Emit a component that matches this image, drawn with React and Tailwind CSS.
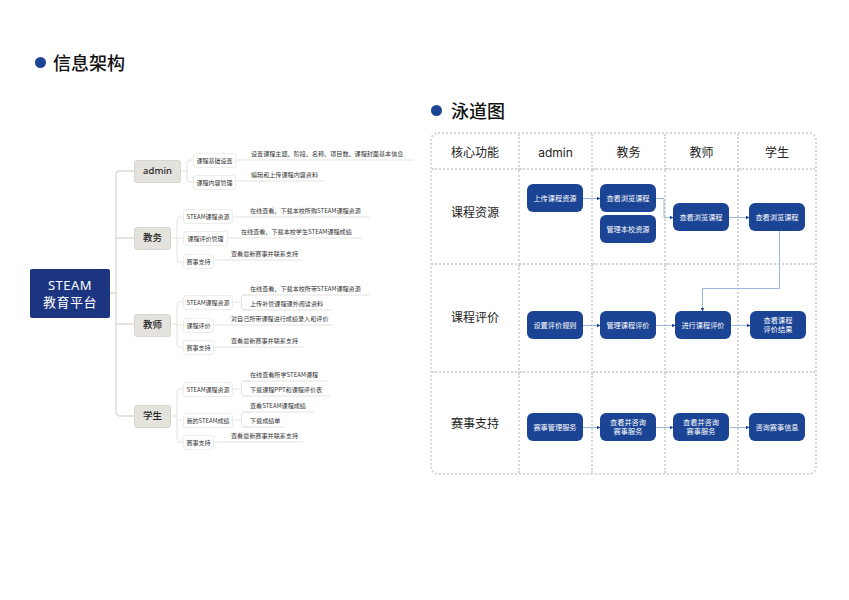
const cjk = '"Noto Sans CJK SC", sans-serif';

// mind map, page coordinates
const roles = [
    { label: 'admin', x: 134, y: 160, w: 47, h: 23 },
    { label: '教务', x: 134, y: 227, w: 37, h: 23 },
    { label: '教师', x: 134, y: 314, w: 37, h: 23 },
    { label: '学生', x: 134, y: 405, w: 37, h: 23 },
];

const topics = [
    { label: '课程基础设置', x: 193, y: 153, w: 43, h: 15 },
    { label: '课程内容管理', x: 193, y: 175, w: 43, h: 15 },
    { label: 'STEAM课程资源', x: 183, y: 209, w: 50, h: 15 },
    { label: '课程评价管理', x: 183, y: 231, w: 45, h: 15 },
    { label: '赛事支持', x: 183, y: 254, w: 31, h: 15 },
    { label: 'STEAM课程资源', x: 183, y: 295, w: 50, h: 15 },
    { label: '课程评价', x: 183, y: 318, w: 31, h: 15 },
    { label: '赛事支持', x: 183, y: 340, w: 31, h: 15 },
    { label: 'STEAM课程资源', x: 183, y: 382, w: 50, h: 15 },
    { label: '我的STEAM成绩', x: 183, y: 413, w: 50, h: 15 },
    { label: '赛事支持', x: 183, y: 435, w: 31, h: 15 },
];

const leaves = [
    { label: '设置课程主题、阶段、名称、项目数、课程封面基本信息', x: 251, y: 160, from: 236, to: 413 },
    { label: '编辑和上传课程内容资料', x: 251, y: 181, from: 236, to: 325 },
    { label: '在线查看、下载本校所购STEAM课程资源', x: 250, y: 217, from: 233, to: 370 },
    { label: '在线查看、下载本校学生STEAM课程成绩', x: 241, y: 238, from: 228, to: 362 },
    { label: '查看最新赛事并联系支持', x: 231, y: 260, from: 214, to: 303 },
    { label: '在线查看、下载本校所带STEAM课程资源', x: 250, y: 295, from: 243, to: 370 },
    { label: '上传补管课程课外阅读资料', x: 250, y: 310, from: 243, to: 333 },
    { label: '对自己所带课程进行成绩录入和评价', x: 231, y: 325, from: 214, to: 333 },
    { label: '查看最新赛事并联系支持', x: 231, y: 347, from: 214, to: 303 },
    { label: '在线查看所学STEAM课程', x: 250, y: 381, from: 243, to: 327 },
    { label: '下载课程PPT和课程评价表', x: 250, y: 396, from: 243, to: 330 },
    { label: '查看STEAM课程成绩', x: 250, y: 412, from: 243, to: 314 },
    { label: '下载成绩单', x: 250, y: 427, from: 243, to: 285 },
    { label: '查看最新赛事并联系支持', x: 231, y: 442, from: 214, to: 303 },
];

function bracket(x0, x1, ys, midY) {
    const top = Math.min(...ys);
    const bottom = Math.max(...ys);
    const mid = (x0 + x1) / 2;
    let d = `M${x0} ${midY}H${mid}M${mid + 3} ${top}Q${mid} ${top} ${mid} ${top + 3}V${bottom - 3}Q${mid} ${bottom} ${mid + 3} ${bottom}`;
    ys.forEach((y) => {
        d += `M${mid + 3} ${y}H${x1}`;
    });
    return d;
}

function MindMap() {
    return (
        <>
            <svg className="absolute inset-0" width="849" height="600" viewBox="0 0 849 600" fill="none">
                <path d="M110 293H116M134 171H120Q116 171 116 175V412Q116 416 120 416H134M116 238H134M116 324H134" stroke="#dcdad3" strokeWidth="1.3" />
                <g stroke="#e3e2dd" strokeWidth="1">
                    <path d={bracket(181, 193, [160, 182], 171)} />
                    <path d={bracket(171, 183, [217, 262], 238)} />
                    <path d="M177 238H183" />
                    <path d={bracket(171, 183, [302, 347], 324)} />
                    <path d="M177 325H183" />
                    <path d={bracket(171, 183, [389, 442], 416)} />
                    <path d="M177 420H183" />
                    <path d={bracket(233, 250, [295, 310], 302)} />
                    <path d={bracket(233, 250, [381, 396], 389)} />
                    <path d={bracket(233, 250, [412, 427], 420)} />
                    {leaves.map((l) => (
                        <path key={l.label + l.y} d={`M${l.from} ${l.y}H${l.to}`} />
                    ))}
                </g>
            </svg>

            <div className="absolute left-[30px] top-[269px] w-[80px] h-[49px] rounded-[2px] bg-[#1c3580] text-white text-[13px] leading-[17px] tracking-[0.5px] flex flex-col items-center justify-center" style={{ fontFamily: '"Noto Sans", "Noto Sans CJK SC", sans-serif' }}>
                <span>STEAM</span>
                <span>教育平台</span>
            </div>

            {roles.map((r) => (
                <div
                    key={r.label}
                    className="absolute rounded-[3px] bg-[#e4e2dd] border border-[#d8d6cf] text-[#222] text-[9.5px] font-medium flex items-center justify-center"
                    style={{ left: r.x, top: r.y, width: r.w, height: r.h, fontFamily: '"Noto Sans", "Noto Sans CJK SC", sans-serif' }}
                >
                    {r.label}
                </div>
            ))}

            {topics.map((t) => (
                <div
                    key={t.label + t.y}
                    className="absolute rounded-[3px] bg-white border border-[#eeede9] text-[#333] text-[6px] flex items-center justify-center whitespace-nowrap"
                    style={{ left: t.x, top: t.y, width: t.w, height: t.h, fontFamily: cjk }}
                >
                    {t.label}
                </div>
            ))}

            {leaves.map((l) => (
                <div
                    key={l.label + l.y}
                    className="absolute text-[#333] text-[6.1px] leading-[8px] whitespace-nowrap"
                    style={{ left: l.x, top: l.y - 10, fontFamily: cjk }}
                >
                    {l.label}
                </div>
            ))}
        </>
    );
}

function Step({ className, children }) {
    return (
        <div className={`w-[56px] h-[28px] shrink-0 rounded-[6px] bg-[#1b4495] text-white text-[7.2px] leading-[9px] text-center flex items-center justify-center ${className}`}>
            <span className="whitespace-pre-line">{children}</span>
        </div>
    );
}

function HeadCell({ children, last }) {
    return (
        <div className={`flex items-center justify-center pt-[3px] text-[12px] text-[#222] border-b-2 border-dotted border-[#d6d6d6] ${last ? '' : 'border-r-2'}`}>
            {children}
        </div>
    );
}

function Lane({ bottom, last, children }) {
    return (
        <div className={`flex flex-col items-start border-dotted border-[#d6d6d6] ${bottom ? 'border-b-2' : ''} ${last ? '' : 'border-r-2'}`}>
            {children}
        </div>
    );
}

function LaneTitle({ bottom, className, children }) {
    return (
        <div className={`flex justify-center text-[12px] text-[#222] border-dotted border-[#d6d6d6] border-r-2 ${bottom ? 'border-b-2' : ''} ${className}`}>
            {children}
        </div>
    );
}

function SwimLane() {
    return (
        <div className="absolute left-[430px] top-[132px] w-[387px] h-[343px] rounded-[8px] border-2 border-dotted border-[#d6d6d6]" style={{ fontFamily: '"Inter", "Noto Sans CJK SC", sans-serif' }}>
            <div className="grid grid-cols-[88px_73px_73px_73px_76px] grid-rows-[36px_95px_108px_100px] h-full">
                <HeadCell>核心功能</HeadCell>
                <HeadCell>admin</HeadCell>
                <HeadCell>教务</HeadCell>
                <HeadCell>教师</HeadCell>
                <HeadCell last>学生</HeadCell>

                <LaneTitle bottom className="pt-[34px]">课程资源</LaneTitle>
                <Lane bottom><Step className="ml-[7px] mt-[14px]">上传课程资源</Step></Lane>
                <Lane bottom>
                    <Step className="ml-[7px] mt-[14px]">查看浏览课程</Step>
                    <Step className="ml-[7px] mt-[3px]">管理本校资源</Step>
                </Lane>
                <Lane bottom><Step className="ml-[7px] mt-[33px]">查看浏览课程</Step></Lane>
                <Lane bottom last><Step className="ml-[10px] mt-[33px]">查看浏览课程</Step></Lane>

                <LaneTitle bottom className="pt-[44px]">课程评价</LaneTitle>
                <Lane bottom><Step className="ml-[7px] mt-[46px]">设置评价规则</Step></Lane>
                <Lane bottom><Step className="ml-[7px] mt-[46px]">管理课程评价</Step></Lane>
                <Lane bottom><Step className="ml-[9px] mt-[46px]">进行课程评价</Step></Lane>
                <Lane bottom last><Step className="ml-[11px] mt-[46px]">{'查看课程\n评价结果'}</Step></Lane>

                <LaneTitle className="pt-[42px]">赛事支持</LaneTitle>
                <Lane><Step className="ml-[7px] mt-[40px]">赛事管理服务</Step></Lane>
                <Lane><Step className="ml-[7px] mt-[40px]">{'查看并咨询\n赛事服务'}</Step></Lane>
                <Lane><Step className="ml-[7px] mt-[40px]">{'查看并咨询\n赛事服务'}</Step></Lane>
                <Lane last><Step className="ml-[10px] mt-[40px]">咨询赛事信息</Step></Lane>
            </div>

            <svg className="absolute left-[-2px] top-[-2px]" width="387" height="343" viewBox="430 132 387 343" fill="none">
                <defs>
                    <marker id="arrow" markerWidth="4" markerHeight="4" refX="3.5" refY="2" orient="auto" markerUnits="userSpaceOnUse">
                        <path d="M0 0L4 2L0 4Z" fill="#1b4495" />
                    </marker>
                </defs>
                <g stroke="#9db6de" strokeWidth="1" markerEnd="url(#arrow)">
                    <path d="M583 198.5H600" />
                    <path d="M656 198.5H664V217.5H673" />
                    <path d="M729 217.5H749" />
                    <path d="M779.5 231V288.5H702.5V311" />
                    <path d="M583 325.5H600" />
                    <path d="M656 325.5H675" />
                    <path d="M731 325.5H750" />
                    <path d="M583 427.5H600" />
                    <path d="M656 427.5H673" />
                    <path d="M730 427.5H749" />
                </g>
            </svg>
        </div>
    );
}

function SectionTitle({ className, gap, children }) {
    return (
        <div className={`absolute flex items-center ${gap} ${className}`}>
            <span className="w-[11px] h-[11px] rounded-full bg-[#1b4495]" />
            <span className="text-[18px] leading-[24px] font-medium text-[#111]" style={{ fontFamily: cjk }}>{children}</span>
        </div>
    );
}

export default function App() {
    return (
        <div className="relative w-[849px] h-[600px] bg-white overflow-hidden">
            <SectionTitle className="left-[35px] top-[50px]" gap="gap-[7px]">信息架构</SectionTitle>
            <MindMap />
            <SectionTitle className="left-[431px] top-[98px]" gap="gap-[9px]">泳道图</SectionTitle>
            <SwimLane />
        </div>
    );
}
